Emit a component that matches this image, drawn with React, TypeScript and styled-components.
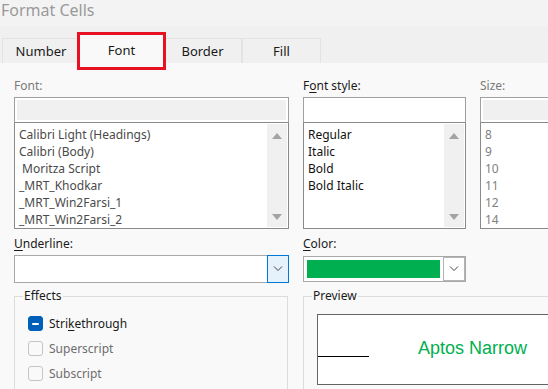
import styled, { createGlobalStyle, css } from 'styled-components';

const GlobalStyle = createGlobalStyle`
  html, body {
    margin: 0;
    padding: 0;
    background: #f0f0f0;
    overflow: hidden;
  }
  body {
    font-family: 'Noto Sans', 'Open Sans', sans-serif;
    font-size: 12px;
    color: #1a1a1a;
  }
`;

const Window = styled.div`
  width: 548px;
  height: 389px;
  display: flex;
  flex-direction: column;
  overflow: hidden;
`;

const TitleBar = styled.div`
  flex-shrink: 0;
  height: 26px;
  padding-left: 1px;
  font-size: 16px;
  line-height: 20px;
  color: #9a9a9a;
  background: #f3f3f3;
`;

const TabRow = styled.div`
  flex-shrink: 0;
  height: 37px;
  display: flex;
  align-items: flex-end;
  padding-left: 2px;
`;

const Tab = styled.div`
  ${({ width, active }: { width: number; active?: boolean }) => css`
    width: ${width}px;
    height: ${active ? 32 : 25}px;
    margin-bottom: ${active ? -4 : 0}px;
    background: ${active ? '#f9f9f9' : '#f0f0f0'};
    border: 1px solid #e3e3e3;
    border-bottom: none;
    ${active &&
    css`
      position: relative;
      z-index: 1;
      border-color: #f9f9f9;
      outline: 3px solid #e81123;
      padding-bottom: 4px;
    `}
  `}
  box-sizing: border-box;
  display: flex;
  align-items: center;
  justify-content: center;
  font-size: 13px;
  color: #1a1a1a;
`;

const Panel = styled.div`
  flex: 1 0 auto;
  background: #f9f9f9;
  padding: 14px 0 0 14px;
  display: flex;
  flex-direction: column;
`;

const Grid = styled.div`
  display: grid;
  grid-template-columns: 275px 163px 200px;
  column-gap: 14px;
`;

const Field = styled.div`
  display: flex;
  flex-direction: column;
`;

const Label = styled.div`
  ${({ top, muted }: { top?: number; muted?: boolean }) => css`
    margin-top: ${top ?? 0}px;
    color: ${muted ? '#7a7a7a' : '#1a1a1a'};
  `}
  height: 20px;
  line-height: 18px;
  white-space: nowrap;
`;

const Accel = styled.span`
  text-decoration: underline;
  text-underline-offset: 2px;
`;

const TextBox = styled.div`
  ${({ filled }: { filled?: boolean }) => css`
    &::after {
      content: '';
      position: absolute;
      inset: 2px;
      background: ${filled ? '#f0f0f0' : 'transparent'};
    }
  `}
  position: relative;
  height: 26px;
  box-sizing: border-box;
  background: #fff;
  border: 1px solid #a0a0a0;
  border-bottom-color: #8a8a8a;
`;

const List = styled.div`
  margin-top: -1px;
  height: 107px;
  box-sizing: border-box;
  background: #fff;
  border: 1px solid #8a8a8a;
  display: flex;
  overflow: hidden;
`;

const Items = styled.div`
  flex: 1;
  padding: 3px 0 0 4px;
  white-space: nowrap;
  overflow: hidden;
`;

const Item = styled.div`
  ${({ color }: { color: string }) => css`
    color: ${color};
  `}
  height: 17px;
  line-height: 17px;
  font-size: 12px;
`;

const ScrollBar = styled.div`
  width: 20px;
  margin: 1px 1px 1px 0;
  background: #f0f0f0;
  display: flex;
  flex-direction: column;
  justify-content: space-between;
  align-items: center;
  padding: 9px 0 7px;
`;

const Arrow = styled.div`
  ${({ down }: { down?: boolean }) => css`
    border-${down ? 'top' : 'bottom'}: 6px solid #a3a3a3;
  `}
  width: 0;
  height: 0;
  border-left: 5px solid transparent;
  border-right: 5px solid transparent;
`;

const Combo = styled.div`
  ${({ h, top }: { h: number; top?: number }) => css`
    height: ${h}px;
    margin-top: ${top ?? 0}px;
  `}
  box-sizing: border-box;
  background: #fff;
  border: 1px solid #a8a8a8;
  display: flex;
  align-items: stretch;
`;

const ComboValue = styled.div`
  flex: 1;
  padding: 3px;
  display: flex;
`;

const Swatch = styled.div`
  flex: 1;
  background: #00b050;
`;

const DropButton = styled.div`
  ${({ focused }: { focused?: boolean }) => css`
    background: ${focused ? '#e5f1fb' : '#fff'};
    border: 1px solid ${focused ? '#0078d7' : '#b4b4b4'};
    margin: ${focused ? '-1px -1px -1px 0' : '0'};
  `}
  width: 20px;
  display: flex;
  align-items: center;
  justify-content: center;
`;

const Group = styled.fieldset`
  ${({ span }: { span?: boolean }) => css`
    grid-column: ${span ? '2 / 4' : 'auto'};
    margin: 0 ${span ? '-40px' : '1px'} 0 0;
  `}
  height: 120px;
  border: 1px solid #dcdcdc;
  padding: 7px 0 0 13px;
  min-width: 0;
  box-sizing: border-box;
  & > legend {
    margin-left: -5px;
    padding: 0 1px;
    line-height: 16px;
    font-size: 12px;
  }
`;

const Groups = styled(Grid)`
  margin-top: 5px;
`;

const CheckRow = styled.div`
  ${({ disabled }: { disabled?: boolean }) => css`
    color: ${disabled ? '#6d6d6d' : '#1a1a1a'};
  `}
  height: 25px;
  display: flex;
  align-items: center;
  gap: 6px;
  font-size: 12px;
`;

const CheckBox = styled.div`
  ${({ checked }: { checked?: boolean }) => css`
    background: ${checked ? '#005fb8' : '#f9f9f9'};
    border: 1px solid ${checked ? '#005fb8' : '#c4c4c4'};
    &::after {
      background: ${checked ? '#fff' : 'transparent'};
    }
  `}
  width: 15px;
  height: 15px;
  box-sizing: border-box;
  border-radius: 3px;
  display: flex;
  align-items: center;
  justify-content: center;
  &::after {
    content: '';
    width: 7px;
    height: 2px;
    border-radius: 1px;
  }
`;

const PreviewBox = styled.div`
  margin: 3px -60px 0 0;
  height: 71px;
  box-sizing: border-box;
  background: #fff;
  border: 1px solid #646464;
  position: relative;
  display: flex;
  align-items: center;
  padding-left: 100px;
`;

const Baseline = styled.div`
  position: absolute;
  left: 0;
  top: 41px;
  width: 51px;
  height: 1px;
  background: #000;
`;

const Sample = styled.div`
  font-family: 'Liberation Sans', Arial, sans-serif;
  font-size: 18px;
  color: #00b050;
  margin-top: -3px;
`;

function Chevron() {
  return (
    <svg width="10" height="6" viewBox="0 0 10 6">
      <path d="M1 0.5 L5 4.5 L9 0.5" fill="none" stroke="#404040" strokeWidth="1" />
    </svg>
  );
}

const fonts = [
  'Calibri Light (Headings)',
  'Calibri (Body)',
  '\u00a0Moritza Script',
  '_MRT_Khodkar',
  '_MRT_Win2Farsi_1',
  '_MRT_Win2Farsi_2',
];
const styles = ['Regular', 'Italic', 'Bold', 'Bold Italic'];
const sizes = ['8', '9', '10', '11', '12', '14'];

export default function App() {
  return (
    <Window>
      <GlobalStyle />
      <TitleBar>Format Cells</TitleBar>
      <TabRow>
        <Tab width={78}>Number</Tab>
        <Tab width={83} active>
          Font
        </Tab>
        <Tab width={79}>Border</Tab>
        <Tab width={79}>Fill</Tab>
      </TabRow>
      <Panel>
        <Grid>
          <Field>
            <Label muted>Font:</Label>
            <TextBox filled />
            <List>
              <Items>
                {fonts.map((f) => (
                  <Item key={f} color="#4a4a4a">
                    {f}
                  </Item>
                ))}
              </Items>
              <ScrollBar>
                <Arrow />
                <Arrow down />
              </ScrollBar>
            </List>
          </Field>
          <Field>
            <Label>
              F<Accel>o</Accel>nt style:
            </Label>
            <TextBox />
            <List>
              <Items>
                {styles.map((s) => (
                  <Item key={s} color="#111">
                    {s}
                  </Item>
                ))}
              </Items>
              <ScrollBar>
                <Arrow />
                <Arrow down />
              </ScrollBar>
            </List>
          </Field>
          <Field>
            <Label muted>Size:</Label>
            <TextBox filled />
            <List>
              <Items>
                {sizes.map((s) => (
                  <Item key={s} color="#7f7f7f">
                    {s}
                  </Item>
                ))}
              </Items>
            </List>
          </Field>
        </Grid>
        <Grid>
          <Field>
            <Label top={6}>
              <Accel>U</Accel>nderline:
            </Label>
            <Combo h={28}>
              <ComboValue />
              <DropButton focused>
                <Chevron />
              </DropButton>
            </Combo>
          </Field>
          <Field>
            <Label top={6}>
              <Accel>C</Accel>olor:
            </Label>
            <Combo h={26} top={1}>
              <ComboValue>
                <Swatch />
              </ComboValue>
              <DropButton>
                <Chevron />
              </DropButton>
            </Combo>
          </Field>
        </Grid>
        <Groups>
          <Group>
            <legend>Effects</legend>
            <CheckRow>
              <CheckBox checked />
              <span>
                Stri<Accel>k</Accel>ethrough
              </span>
            </CheckRow>
            <CheckRow disabled>
              <CheckBox />
              <span>Superscript</span>
            </CheckRow>
            <CheckRow disabled>
              <CheckBox />
              <span>Subscript</span>
            </CheckRow>
          </Group>
          <Group span>
            <legend>Preview</legend>
            <PreviewBox>
              <Baseline />
              <Sample>Aptos Narrow</Sample>
            </PreviewBox>
          </Group>
        </Groups>
      </Panel>
    </Window>
  );
}
